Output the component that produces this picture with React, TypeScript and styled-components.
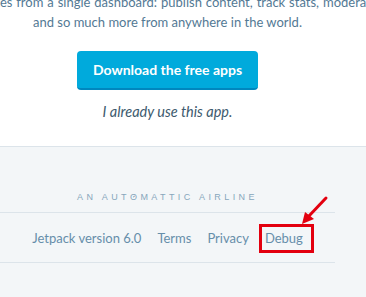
import React from "react";
import styled, { createGlobalStyle } from "styled-components";

const Global = createGlobalStyle`
  html, body { margin: 0; padding: 0; background: #ffffff; }
  body { font-family: Lato, "Open Sans", sans-serif; overflow: hidden; }
  * { box-sizing: border-box; }
`;

const Page = styled.div`
  width: 366px;
  height: 297px;
  overflow: hidden;
  display: flex;
  flex-direction: column;
  position: relative;
`;

const Intro = styled.section`
  width: 335px;
  display: flex;
  flex-direction: column;
  align-items: center;
  padding-bottom: 24px;
`;

const Lede = styled.p`
  margin: -8px 0 0;
  display: flex;
  flex-direction: column;
  align-items: center;
  font-size: 13px;
  line-height: 20px;
  color: #537994;
`;

const Line = styled.span<{ $loose?: boolean }>`
  white-space: nowrap;
  word-spacing: ${(p) => (p.$loose ? "0.6px" : "0")};
`;

const PrimaryButton = styled.button`
  margin-top: 19px;
  height: 39px;
  width: 181px;
  border: 0;
  border-bottom: 2px solid #0087be;
  border-radius: 4px;
  background: #00aadc;
  color: #ffffff;
  font-family: Lato, "Open Sans", sans-serif;
  font-weight: 700;
  font-size: 14px;
  padding: 0;
  cursor: pointer;
`;

const SecondaryLink = styled.a`
  margin-top: 12px;
  font-size: 14.5px;
  line-height: 20px;
  font-style: italic;
  color: #3d5a6e;
  text-decoration: none;
`;

const Footer = styled.footer`
  flex: 1;
  background: #f3f6f8;
  border-top: 1px solid #dce4ea;
  display: flex;
  flex-direction: column;
`;

const Airline = styled.div`
  width: 335px;
  padding: 44px 0 9px;
  text-align: center;
  font-family: "Liberation Sans", Arial, sans-serif;
  font-size: 9px;
  line-height: 12px;
  letter-spacing: 3.4px;
  color: #87a6bc;
  border-bottom: 1px solid #dce4ea;
`;

const LogoO = styled.span`
  position: relative;
  display: inline-block;
  &::after {
    content: "";
    position: absolute;
    left: 3px;
    top: 5px;
    width: 2px;
    height: 1.2px;
    background: #87a6bc;
    transform: rotate(-45deg);
  }
`;

const LinkRow = styled.nav`
  width: 335px;
  height: 50px;
  display: flex;
  align-items: center;
  justify-content: center;
  gap: 16px;
  border-bottom: 1px solid #dce4ea;
  font-size: 13px;
  color: #668eaa;
`;

const FooterLink = styled.a<{ $highlight?: boolean }>`
  position: relative;
  color: #668eaa;
  text-decoration: none;
  white-space: nowrap;
  ${(p) =>
    p.$highlight &&
    `
    &::after {
      content: "";
      position: absolute;
      left: -6px;
      right: -11px;
      top: -6px;
      bottom: -7px;
      border: 3px solid #e3000f;
    }
  `}
`;

const Arrow = styled.svg`
  position: absolute;
  left: 298px;
  top: 194px;
  overflow: visible;
`;

export default function App() {
  return (
    <>
      <Global />
      <Page>
        <Intro>
          <Lede>
            <Line $loose>Manage all your sites from a single dashboard: publish content, track stats, moderate comments,</Line>
            <Line>and so much more from anywhere in the world.</Line>
          </Lede>
          <PrimaryButton>Download the free apps</PrimaryButton>
          <SecondaryLink href="#">I already use this app.</SecondaryLink>
        </Intro>
        <Footer>
          <Airline>
            AN AUT<LogoO>O</LogoO>MATTIC AIRLINE
          </Airline>
          <LinkRow>
            <FooterLink href="#">Jetpack version 6.0</FooterLink>
            <FooterLink href="#">Terms</FooterLink>
            <FooterLink href="#">Privacy</FooterLink>
            <FooterLink href="#" $highlight>Debug</FooterLink>
          </LinkRow>
        </Footer>
        <Arrow width="32" height="32" viewBox="0 0 32 32">
          <line x1="28" y1="4" x2="10" y2="23" stroke="#e3000f" strokeWidth="3" strokeLinecap="round" />
          <polygon points="4,30 7,18 16,25" fill="#e3000f" />
        </Arrow>
      </Page>
    </>
  );
}
